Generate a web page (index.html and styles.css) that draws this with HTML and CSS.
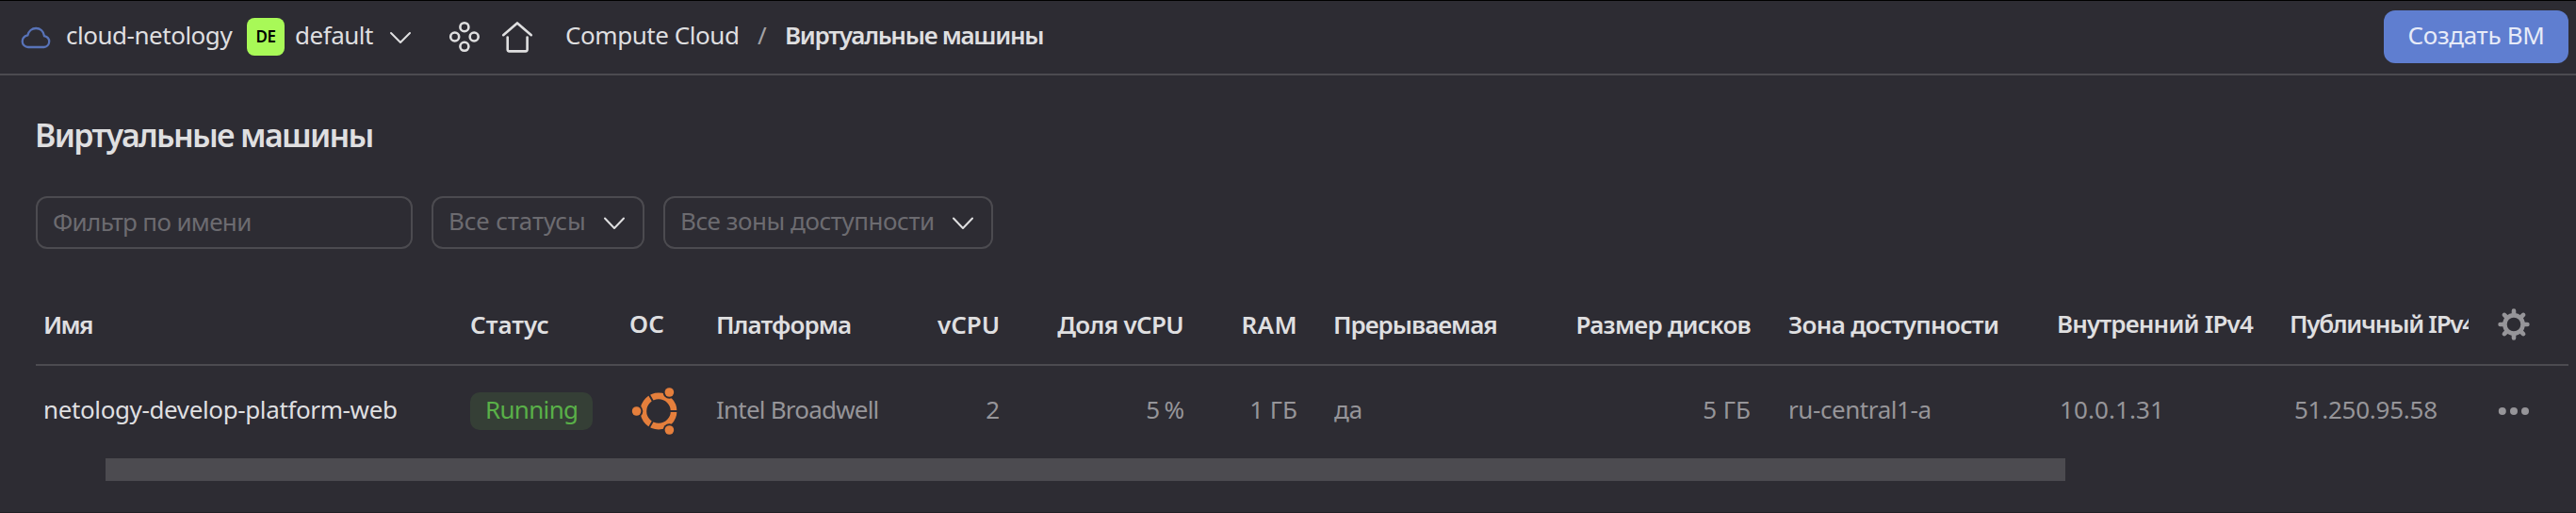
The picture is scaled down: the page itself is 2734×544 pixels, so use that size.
FILE: index.html
```html
<!DOCTYPE html>
<html lang="ru">
<head>
<meta charset="utf-8">
<title>Виртуальные машины</title>
<link rel="stylesheet" href="styles.css">
</head>
<body>
<div class="page">
  <header class="topbar">
    <svg class="cloud-icon" viewBox="0 0 32 24" width="32" height="24"><path d="M8 22H24.5A6 6 0 0 0 30.2 16.3C30.2 13 28 10.8 25 10.2C24.2 5 20.5 2 16.2 2C11.8 2 8.4 5 7.4 9.3C3.8 10.2 1.7 12.8 1.7 15.9A6.2 6.2 0 0 0 8 22Z"/></svg>
    <span class="cloud-name">cloud-netology</span>
    <span class="folder-badge">DE</span>
    <span class="folder-name">default</span>
    <svg class="chevron" viewBox="0 0 22 12" width="22" height="12"><path d="M1 1L11 11L21 1"/></svg>
    <svg class="services-icon" viewBox="0 0 34 34" width="34" height="34"><circle cx="16.9" cy="6.7" r="4.5"/><circle cx="6.7" cy="17" r="4.5"/><circle cx="27.2" cy="17" r="4.5"/><circle cx="16.9" cy="27.3" r="4.5"/></svg>
    <svg class="home-icon" viewBox="0 0 34 34" width="34" height="34"><path d="M2.2 15.2L17 2.4L31.8 15.2M6.7 17.5V30.6Q6.7 32.4 8.5 32.4H25.8Q27.6 32.4 27.6 30.6V17.5"/></svg>
    <nav class="crumbs">
      <span class="crumb-service">Compute Cloud</span>
      <span class="crumb-slash">/</span>
      <span class="crumb-current">Виртуальные машины</span>
    </nav>
    <button class="create">Создать ВМ</button>
  </header>
  <main class="content">
    <h1 class="title">Виртуальные машины</h1>
    <div class="filters">
      <input class="field name-filter" placeholder="Фильтр по имени">
      <div class="field select status-select"><span class="status-text">Все статусы</span><svg class="chevron" viewBox="0 0 22 14" width="22" height="14"><path d="M1 1.5L11 12L21 1.5"/></svg></div>
      <div class="field select zone-select"><span class="zone-text">Все зоны доступности</span><svg class="chevron" viewBox="0 0 22 14" width="22" height="14"><path d="M1 1.5L11 12L21 1.5"/></svg></div>
    </div>
    <section class="table">
      <div class="row head">
        <div class="h-name">Имя</div>
        <div class="h-status">Статус</div>
        <div class="h-os raised">ОС</div>
        <div class="h-platform">Платформа</div>
        <div class="h-vcpu num">vCPU</div>
        <div class="h-share num">Доля vCPU</div>
        <div class="h-ram num">RAM</div>
        <div class="h-preempt">Прерываемая</div>
        <div class="h-disk num">Размер дисков</div>
        <div class="h-zone">Зона доступности</div>
        <div class="h-internal raised">Внутренний IPv4</div>
        <div class="h-public raised">Публичный IPv4</div>
        <div class="tools"><svg viewBox="-18 -18 36 36" width="36" height="36"><circle class="gear" r="9.6"/><path class="teeth" d="M0-10.5V-14.4M0 10.5V14.4M-10.5 0H-14.4M10.5 0H14.4M-7.5-7.5L-10.1-10.1M7.5 7.5L10.1 10.1M-7.5 7.5L-10.1 10.1M7.5-7.5L10.1-10.1"/></svg></div>
      </div>
      <div class="row item">
        <div class="vm-name">netology-develop-platform-web</div>
        <div class="vm-status"><span class="status">Running</span></div>
        <div class="vm-os"><svg viewBox="-29 -29 58 58" width="58" height="58"><circle class="ring" r="16.1"/><path class="gap" d="M11 0H22M-5.5-9.5L-11-19.1M-5.5 9.5L-11 19.1"/><g class="halo"><circle cx="-23.4" r="6.7"/><circle cx="11.4" cy="-20" r="6.7"/><circle cx="11.4" cy="20" r="6.7"/></g><g class="friends"><circle cx="-23.4" r="4.8"/><circle cx="11.4" cy="-20" r="4.8"/><circle cx="11.4" cy="20" r="4.8"/></g></svg></div>
        <div class="vm-platform">Intel Broadwell</div>
        <div class="vm-vcpu num">2</div>
        <div class="vm-share num">5&#8239;%</div>
        <div class="vm-ram num">1 ГБ</div>
        <div class="vm-preempt">да</div>
        <div class="vm-disk num">5 ГБ</div>
        <div class="vm-zone">ru-central1-a</div>
        <div class="vm-internal">10.0.1.31</div>
        <div class="vm-public">51.250.95.58</div>
        <div class="tools"><svg viewBox="-18 -18 36 36" width="36" height="36"><g class="dots"><circle cx="-12.2" r="4"/><circle r="4"/><circle cx="12" r="4"/></g></svg></div>
      </div>
    </section>
    <div class="scrollbar"></div>
  </main>
</div>
</body>
</html>
```

FILE: styles.css
```css
* { box-sizing: border-box; }
body { margin: 0; background: #2d2c33; }
.page {
  height: 544px;
  border-top: 1px solid #000;
  border-bottom: 1px solid #201f24;
  color: #dfdfe0;
  font: 26px/36px "Noto Sans", sans-serif;
  white-space: nowrap;
  overflow: hidden;
}
svg { display: block; flex: none; fill: none; overflow: visible; }

.topbar {
  display: flex;
  align-items: center;
  height: 79px;
  padding: 0 8px 2px 22px;
  border-bottom: 2px solid #4c4b50;
}
.topbar span { position: relative; top: -2px; }
.cloud-icon { stroke: #5873b8; stroke-width: 2.3; margin-top: 2px; }
.cloud-name { margin-left: 16px; width: 192px; letter-spacing: -0.48px; }
.topbar .folder-badge {
  top: 0;
  width: 40px;
  height: 40px;
  border-radius: 8px;
  background: #a8f957;
  color: #000;
  font-size: 17px;
  font-weight: 600;
  line-height: 39px;
  letter-spacing: -0.44px;
  text-align: center;
}
.folder-name { margin-left: 11px; width: 101px; letter-spacing: -0.49px; }
.chevron { stroke: #dfdfe0; stroke-width: 2; stroke-linecap: round; stroke-linejoin: round; }
.topbar .chevron { margin-top: 2px; }
.services-icon { margin-left: 40px; stroke: #dfdfe0; stroke-width: 2.6; }
.home-icon { margin-left: 22px; stroke: #dfdfe0; stroke-width: 2.6; stroke-linecap: round; stroke-linejoin: round; }
.crumbs { display: flex; margin-left: 34px; }
.crumb-service { width: 204px; letter-spacing: -0.44px; }
.crumb-slash { width: 29px; color: #a3a2a5; }
.crumb-current { font-weight: 600; letter-spacing: -1.29px; }
.create {
  width: 196px;
  height: 56px;
  margin-left: auto;
  padding: 0 0 4px;
  border: 0;
  border-radius: 12px;
  background: #5f7ed0;
  color: #e7ebf8;
  font: inherit;
  letter-spacing: -0.33px;
}

.content { padding: 43px 8px 0 38px; }
.title { margin: 0 0 45px -1px; font-size: 34px; font-weight: 600; line-height: 40px; letter-spacing: -1.69px; }
.filters { display: flex; gap: 20px; }
.field {
  height: 56px;
  border: 2px solid #4c4b50;
  border-radius: 12px;
  background: transparent;
  color: #6c6b70;
}
.name-filter { width: 400px; padding: 0 16px 2px; font: inherit; letter-spacing: -0.65px; }
.name-filter::placeholder { color: #6c6b70; opacity: 1; }
.select { display: flex; align-items: center; justify-content: space-between; padding: 0 19px 0 16px; }
.select span { margin-top: -4px; }
.select .chevron { margin-top: 1px; }
.status-select { width: 226px; }
.zone-select { width: 350px; }
.status-text { letter-spacing: -0.1px; }
.zone-text { letter-spacing: -0.45px; }

.table { margin-top: 38px; }
.row {
  display: grid;
  grid-template-columns: 452px 170px 91px 218px 100px 196px 142px 257px 201px 308px 249px 198px 106px;
  align-items: center;
}
.row > div { padding: 0 8px 4px; }
.row .num { padding-right: 8px; text-align: right; }
.head { height: 86px; padding-bottom: 2px; background: linear-gradient(#4c4b50, #4c4b50) bottom / 100% 2px no-repeat; font-weight: 600; }
.head > div { padding: 0 8px; }
.head .raised { padding-bottom: 2px; }
.item { height: 96px; color: #969599; }

.h-name { letter-spacing: -1.66px; }
.row .h-status { padding-left: 9px; }
.row .h-platform, .row .vm-platform { padding-left: 9px; }
.h-platform { letter-spacing: -0.91px; }
.h-vcpu { letter-spacing: -0.07px; }
.row .h-share { padding-right: 9px; letter-spacing: -0.68px; }
.h-ram { letter-spacing: 0.4px; }
.h-preempt { letter-spacing: -1.03px; }
.row .h-disk, .row .vm-disk { padding-right: 7px; }
.h-disk { letter-spacing: -0.73px; }
.h-zone { letter-spacing: -0.68px; }
.row .h-internal { padding-left: 10px; letter-spacing: -0.84px; }
.h-os { letter-spacing: 0.3px; }
.row .h-public { padding-right: 0; letter-spacing: -1.3px; overflow: hidden; }
.row .h-ram, .row .vm-ram { padding-right: 30px; }
.row .h-zone, .row .vm-zone { padding-left: 33px; }

.row .vm-name { color: #dfdfe0; letter-spacing: -0.38px; }
.row .vm-status { padding: 0 0 0 9px; }
.status {
  display: block;
  width: 130px;
  height: 40px;
  padding-left: 16px;
  border-radius: 10px;
  background: #353f36;
  color: #59b048;
  line-height: 36px;
  letter-spacing: -0.69px;
}
.row .vm-os { padding: 0 0 0 10px; }
.vm-platform { letter-spacing: -0.79px; }
.vm-share { letter-spacing: -0.9px; }
.row .vm-preempt { padding-left: 9px; }
.vm-zone { letter-spacing: -0.42px; }
.row .vm-internal { padding-left: 13px; letter-spacing: 0.1px; }
.row .vm-public { padding-left: 13px; letter-spacing: -0.25px; }
.ring { stroke: #e57f3c; stroke-width: 6.6; }
.gap { stroke: #2d2c33; stroke-width: 2; }
.halo { fill: #2d2c33; }
.friends { fill: #e57f3c; }
.row .tools { padding: 0 0 0 30px; }
.gear { stroke: #969599; stroke-width: 4.6; }
.teeth { stroke: #969599; stroke-width: 4.6; stroke-linecap: round; }
.dots { fill: #969599; }

.scrollbar { width: 2080px; height: 24px; margin: 2px 0 0 74px; background: #4c4b50; }
```
